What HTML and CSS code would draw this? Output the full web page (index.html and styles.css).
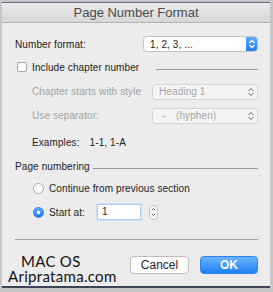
FILE: index.html
```html
<!DOCTYPE html>
<html lang="en">
<head>
    <meta charset="UTF-8">
    <title>Page Number Format</title>
    <link rel="stylesheet" href="styles.css">
</head>
<body>
    <div class="window">
        <div class="titlebar">Page Number Format</div>

        <div class="content">
            <div class="row row-format">
                <span class="label">Number format:</span>
                <div class="popup popup-main">
                    <span class="popup-text">1, 2, 3, ...</span>
                    <span class="popup-arrow">
                        <svg width="8" height="10" viewBox="0 0 8 10"><path d="M1.5 4 L4 1.5 L6.5 4 M1.5 6 L4 8.5 L6.5 6" fill="none" stroke="#fff" stroke-width="1.3"/></svg>
                    </span>
                </div>
            </div>

            <div class="row row-check">
                <span class="checkbox"></span>
                <span class="label">Include chapter number</span>
                <span class="rule rule-check"></span>
            </div>

            <div class="row row-sub">
                <span class="label disabled">Chapter starts with style</span>
                <div class="popup popup-off">
                    <span class="popup-text">Heading 1</span>
                    <span class="popup-chev">
                        <svg width="8" height="10" viewBox="0 0 8 10"><path d="M1.5 4 L4 1.5 L6.5 4 M1.5 6 L4 8.5 L6.5 6" fill="none" stroke="#9a9a9a" stroke-width="1.2"/></svg>
                    </span>
                </div>
            </div>

            <div class="row row-sub">
                <span class="label disabled">Use separator:</span>
                <div class="popup popup-off">
                    <span class="popup-text"><span class="dash">-</span>(hyphen)</span>
                    <span class="popup-chev">
                        <svg width="8" height="10" viewBox="0 0 8 10"><path d="M1.5 4 L4 1.5 L6.5 4 M1.5 6 L4 8.5 L6.5 6" fill="none" stroke="#9a9a9a" stroke-width="1.2"/></svg>
                    </span>
                </div>
            </div>

            <div class="row row-examples">
                <span class="label">Examples:</span>
                <span class="label">1-1, 1-A</span>
            </div>

            <div class="row row-section">
                <span class="label">Page numbering</span>
                <span class="rule"></span>
            </div>

            <div class="row row-radio">
                <span class="radio"></span>
                <span class="label">Continue from previous section</span>
            </div>

            <div class="row row-start">
                <span class="radio radio-on"></span>
                <span class="label start-label">Start at:</span>
                <span class="field">1</span>
                <span class="stepper">
                    <svg width="8" height="14" viewBox="0 0 8 14"><path d="M2 5 L4 3 L6 5 M2 9 L4 11 L6 9" fill="none" stroke="#555" stroke-width="1.1"/></svg>
                </span>
            </div>

            <div class="divider"></div>

            <div class="footer">
                <button class="btn">Cancel</button>
                <button class="btn btn-ok">OK</button>
            </div>
        </div>

        <div class="watermark">
            <div class="wm-top">MAC OS</div>
            <div>Aripratama.com</div>
        </div>
    </div>
</body>
</html>
```

FILE: styles.css
```css
* {
    margin: 0;
    padding: 0;
    box-sizing: border-box;
}

body {
    background-color: #c6c6c6;
    font-family: 'Liberation Sans', Arial, sans-serif;
    font-size: 10px;
    letter-spacing: 0.1px;
    color: #222;
    height: 292px;
    overflow: hidden;
}

.window {
    position: relative;
    margin: 2px 3px 0 2px;
    height: 286px;
    background: #ececec;
    border-top: 1px solid #5d6585;
    border-bottom: 2px solid #3c4258;
}

.titlebar {
    height: 20px;
    line-height: 20px;
    text-align: center;
    font-size: 13px;
    letter-spacing: 0;
    color: #4a4a4a;
    background: linear-gradient(#ebebeb, #d6d6d6);
    border-bottom: 1px solid #b3b3b3;
}

.content {
    padding: 13px 12px 0 13px;
}

.row {
    display: flex;
    align-items: center;
}

.label {
    white-space: nowrap;
}

.disabled {
    color: #a3a3a3;
}

.row-format {
    height: 16px;
    justify-content: space-between;
}

.popup {
    display: flex;
    align-items: center;
    height: 16px;
    border-radius: 4px;
    overflow: hidden;
}

.popup-main {
    width: 115px;
    background: #fff;
    border: 1px solid #c4c4c4;
}

.popup-text {
    flex: 1;
    padding-left: 6px;
}

.popup-arrow {
    width: 12px;
    height: 16px;
    display: flex;
    align-items: center;
    justify-content: center;
    background: linear-gradient(#63adfc, #1b79f2);
    margin-right: -1px;
}

.popup-off {
    width: 106px;
    margin-left: auto;
    background: #f4f4f4;
    border: 1px solid #d6d6d6;
    color: #a5a5a5;
}

.popup-chev {
    width: 12px;
    display: flex;
    justify-content: center;
}

.dash {
    display: inline-block;
    width: 17px;
    padding-left: 3px;
}

.row-check {
    height: 14px;
    margin-top: 8px;
}

.checkbox {
    width: 10px;
    height: 10px;
    margin: 0 5px 0 2px;
    background: #fff;
    border: 1px solid #a4a4a4;
    border-radius: 2px;
}

.rule {
    flex: 1;
    height: 1px;
    background: #9a9a9a;
    margin: 4px 0 0 3px;
}

.rule-check {
    flex: none;
    width: 102px;
    margin-left: auto;
}

.row-sub {
    height: 15px;
    margin-top: 10px;
    padding-left: 17px;
}

.row-sub + .row-sub {
    margin-top: 9px;
}

.row-examples {
    height: 14px;
    margin-top: 12px;
    padding-left: 17px;
    gap: 10px;
}

.row-section {
    height: 14px;
    margin-top: 10px;
}

.row-radio {
    height: 14px;
    margin-top: 8px;
    padding-left: 18px;
}

.radio {
    width: 11px;
    height: 11px;
    margin-right: 5px;
    border-radius: 50%;
    background: #fff;
    border: 1px solid #a8a8a8;
}

.radio-on {
    border-color: #2b84f3;
    background: radial-gradient(circle, #fff 0 1.6px, transparent 2px), linear-gradient(#5eaafc, #1c7af2);
}

.row-start {
    height: 16px;
    margin-top: 9px;
    padding-left: 18px;
}

.start-label {
    width: 48px;
}

.field {
    width: 44px;
    height: 16px;
    line-height: 14px;
    padding-left: 4px;
    background: #fff;
    border: 1px solid #a9cbef;
    box-shadow: 0 0 0 1px #cfe2f7;
}

.stepper {
    display: flex;
    margin-left: 8px;
    width: 9px;
    height: 15px;
    align-items: center;
    justify-content: center;
    background: #f7f7f7;
    border: 1px solid #c2c2c2;
    border-radius: 4px;
}

.divider {
    height: 1px;
    background: #a2a2a2;
    margin-top: 19px;
}

.footer {
    display: flex;
    justify-content: flex-end;
    gap: 11px;
    margin-top: 16px;
}

.btn {
    height: 18px;
    font-family: inherit;
    font-size: 12px;
    border-radius: 4px;
}

.btn:first-child {
    width: 59px;
    background: #fff;
    border: 1px solid #bfbfbf;
    color: #222;
}

.btn-ok {
    width: 58px;
    border: 1px solid #2a83ee;
    background: linear-gradient(#6ab4fc, #1f80f5);
    color: #fff;
    font-weight: bold;
}

.watermark {
    position: absolute;
    left: 6px;
    top: 251px;
    font-family: 'Lato', 'Liberation Sans', sans-serif;
    font-size: 15px;
    line-height: 15px;
    letter-spacing: 0.3px;
    color: #111;
}

.wm-top {
    padding-left: 13px;
}
```
